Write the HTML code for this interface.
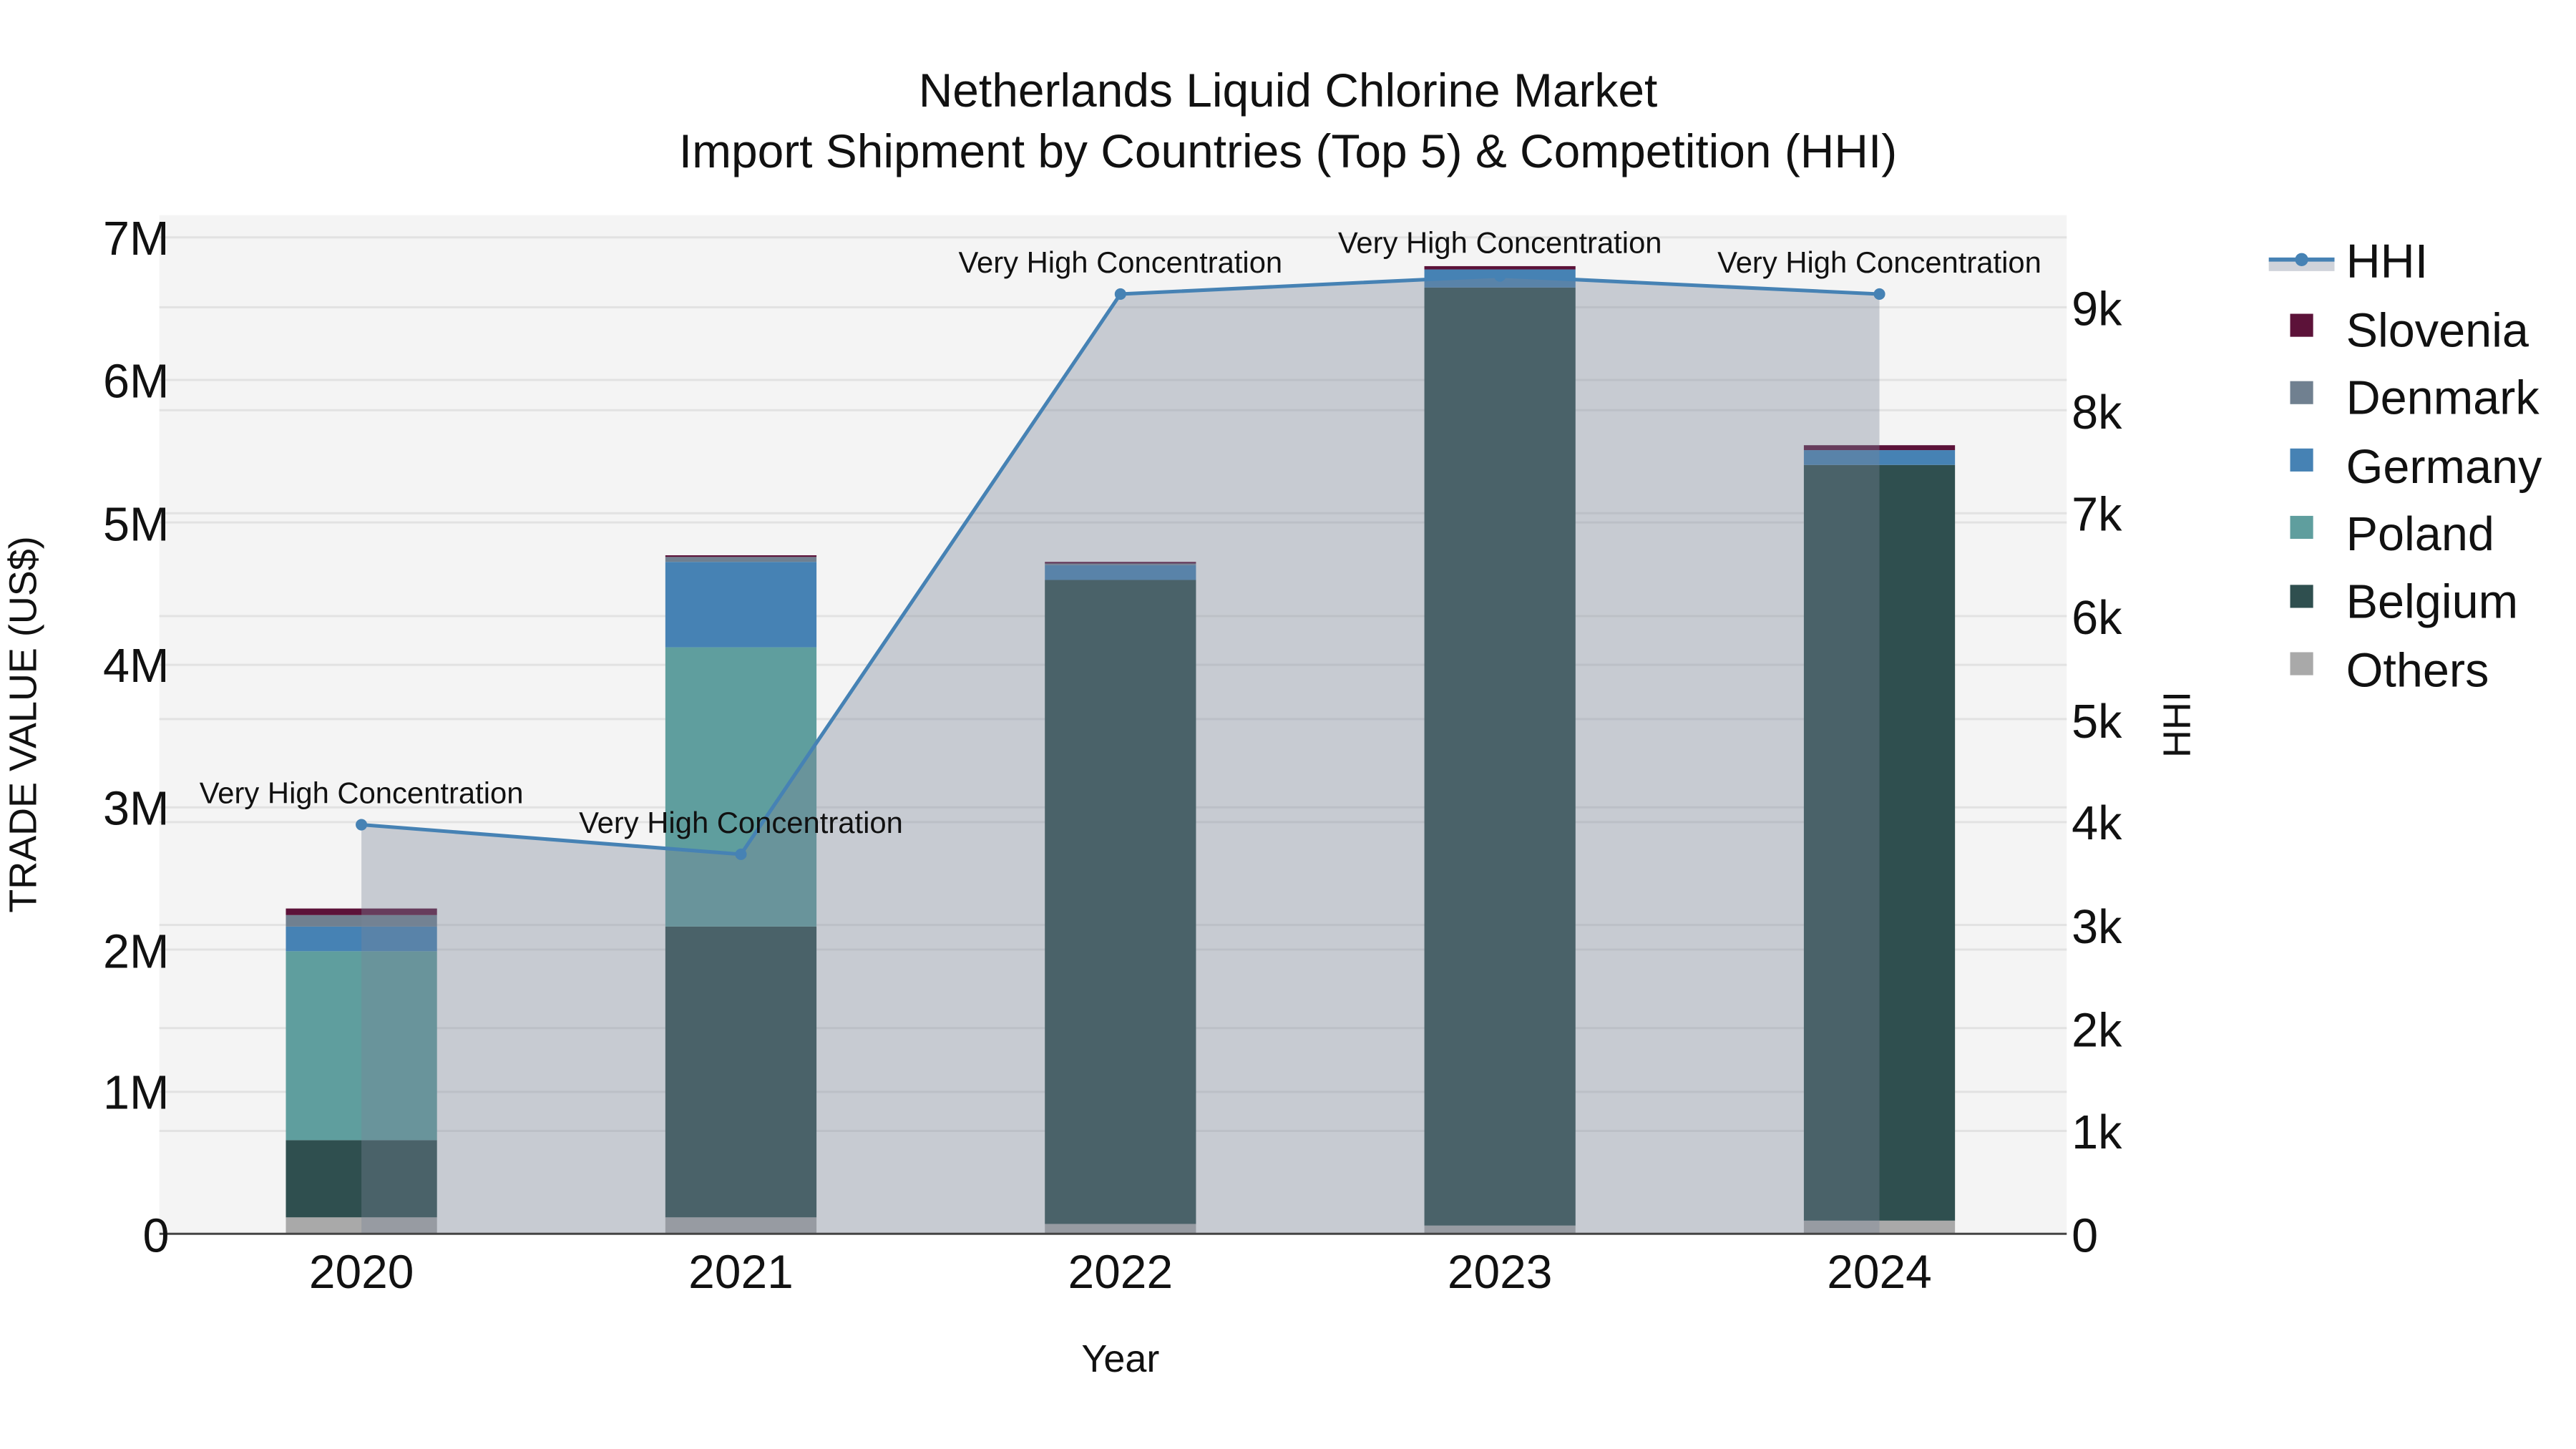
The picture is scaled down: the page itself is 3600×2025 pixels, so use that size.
<!DOCTYPE html>
<html><head><meta charset="utf-8"><style>
html,body{margin:0;padding:0;background:#fff;}
svg{display:block;}
text{font-family:"Liberation Sans",sans-serif;fill:#111;}
</style></head><body>
<svg width="3600" height="2025" viewBox="0 0 1568 882" preserveAspectRatio="none" xmlns="http://www.w3.org/2000/svg">
<rect x="0" y="0" width="1568" height="882" fill="#fff"/>
<rect x="97" y="131" width="1161" height="620" fill="#f4f4f4"/>
<g stroke="#e2e2e2" stroke-width="1.3">
<line x1="97" x2="1258" y1="144.5" y2="144.5"/><line x1="97" x2="1258" y1="231.3" y2="231.3"/><line x1="97" x2="1258" y1="318" y2="318"/><line x1="97" x2="1258" y1="404.7" y2="404.7"/><line x1="97" x2="1258" y1="491.4" y2="491.4"/><line x1="97" x2="1258" y1="578" y2="578"/><line x1="97" x2="1258" y1="664.6" y2="664.6"/>
<line x1="97" x2="1258" y1="187" y2="187"/><line x1="97" x2="1258" y1="249.7" y2="249.7"/><line x1="97" x2="1258" y1="312.4" y2="312.4"/><line x1="97" x2="1258" y1="375" y2="375"/><line x1="97" x2="1258" y1="437.7" y2="437.7"/><line x1="97" x2="1258" y1="500.4" y2="500.4"/><line x1="97" x2="1258" y1="563" y2="563"/><line x1="97" x2="1258" y1="625.8" y2="625.8"/><line x1="97" x2="1258" y1="688.4" y2="688.4"/>
</g>
<rect x="174" y="741" width="92" height="10" fill="#a9a9a9"/>
<rect x="174" y="694" width="92" height="47" fill="#2f4f4f"/>
<rect x="174" y="579" width="92" height="115" fill="#5f9e9e"/>
<rect x="174" y="564" width="92" height="15" fill="#4682b4"/>
<rect x="174" y="557" width="92" height="7" fill="#708090"/>
<rect x="174" y="553" width="92" height="4" fill="#5c1239"/>
<rect x="405" y="741" width="92" height="10" fill="#a9a9a9"/>
<rect x="405" y="564" width="92" height="177" fill="#2f4f4f"/>
<rect x="405" y="394" width="92" height="170" fill="#5f9e9e"/>
<rect x="405" y="342" width="92" height="52" fill="#4682b4"/>
<rect x="405" y="339" width="92" height="3" fill="#708090"/>
<rect x="405" y="338" width="92" height="1" fill="#5c1239"/>
<rect x="636" y="745" width="92" height="6" fill="#a9a9a9"/>
<rect x="636" y="353" width="92" height="392" fill="#2f4f4f"/>
<rect x="636" y="344" width="92" height="9" fill="#4682b4"/>
<rect x="636" y="343" width="92" height="1" fill="#708090"/>
<rect x="636" y="342" width="92" height="1" fill="#5c1239"/>
<rect x="867" y="746" width="92" height="5" fill="#a9a9a9"/>
<rect x="867" y="175" width="92" height="571" fill="#2f4f4f"/>
<rect x="867" y="164" width="92" height="11" fill="#4682b4"/>
<rect x="867" y="162" width="92" height="2" fill="#5c1239"/>
<rect x="1098" y="743" width="92" height="8" fill="#a9a9a9"/>
<rect x="1098" y="283" width="92" height="460" fill="#2f4f4f"/>
<rect x="1098" y="274" width="92" height="9" fill="#4682b4"/>
<rect x="1098" y="271" width="92" height="3" fill="#5c1239"/>
<polygon points="220,751 220,502 451,520 682,179 913,168 1144,179 1144,751" fill="rgb(122,133,152)" fill-opacity="0.37"/>
<polyline points="220,502 451,520 682,179 913,168 1144,179" fill="none" stroke="#4682b4" stroke-width="2.2"/>
<g fill="#4682b4"><circle cx="220" cy="502" r="3.5"/><circle cx="451" cy="520" r="3.5"/><circle cx="682" cy="179" r="3.5"/><circle cx="913" cy="168" r="3.5"/><circle cx="1144" cy="179" r="3.5"/></g>
<line x1="97" x2="1258" y1="751" y2="751" stroke="#444" stroke-width="1.3"/>
<g font-size="18.2" text-anchor="middle">
<text x="220" y="489">Very High Concentration</text>
<text x="451" y="507">Very High Concentration</text>
<text x="682" y="166">Very High Concentration</text>
<text x="913" y="154">Very High Concentration</text>
<text x="1144" y="166">Very High Concentration</text>
</g>
<g font-size="28.7" text-anchor="middle">
<text x="784" y="65">Netherlands Liquid Chlorine Market</text>
<text x="784" y="102">Import Shipment by Countries (Top 5) &amp; Competition (HHI)</text>
</g>
<g font-size="29" text-anchor="end">
<text x="103" y="155">7M</text><text x="103" y="242">6M</text><text x="103" y="329">5M</text><text x="103" y="415">4M</text><text x="103" y="502">3M</text><text x="103" y="589">2M</text><text x="103" y="675">1M</text><text x="103" y="762">0</text>
</g>
<g font-size="29" text-anchor="start">
<text x="1261" y="198">9k</text><text x="1261" y="261">8k</text><text x="1261" y="323">7k</text><text x="1261" y="386">6k</text><text x="1261" y="449">5k</text><text x="1261" y="511">4k</text><text x="1261" y="574">3k</text><text x="1261" y="637">2k</text><text x="1261" y="699">1k</text><text x="1261" y="762">0</text>
</g>
<g font-size="28.7" text-anchor="middle">
<text x="220" y="784">2020</text><text x="451" y="784">2021</text><text x="682" y="784">2022</text><text x="913" y="784">2023</text><text x="1144" y="784">2024</text>
</g>
<text x="682" y="835" font-size="23.5" text-anchor="middle">Year</text>
<text x="0" y="0" font-size="23.5" text-anchor="middle" transform="translate(22,441) rotate(-90)">TRADE VALUE (US$)</text>
<text x="0" y="0" font-size="23.5" text-anchor="middle" transform="translate(1333,441) rotate(-90)">HHI</text>
<rect x="1381" y="158" width="40" height="7" fill="#cfd3da"/>
<line x1="1381" x2="1421" y1="158" y2="158" stroke="#4682b4" stroke-width="2.5"/>
<circle cx="1401" cy="158" r="4" fill="#4682b4"/>
<g font-size="29">
<text x="1428" y="169">HHI</text>
<text x="1428" y="211">Slovenia</text>
<text x="1428" y="252">Denmark</text>
<text x="1428" y="294">Germany</text>
<text x="1428" y="335">Poland</text>
<text x="1428" y="376">Belgium</text>
<text x="1428" y="418">Others</text>
</g>
<rect x="1394" y="191" width="14" height="14" fill="#5c1239"/>
<rect x="1394" y="232" width="14" height="14" fill="#708090"/>
<rect x="1394" y="273" width="14" height="14" fill="#4682b4"/>
<rect x="1394" y="314" width="14" height="14" fill="#5f9e9e"/>
<rect x="1394" y="356" width="14" height="14" fill="#2f4f4f"/>
<rect x="1394" y="397" width="14" height="14" fill="#a9a9a9"/>
</svg>
</body></html>
